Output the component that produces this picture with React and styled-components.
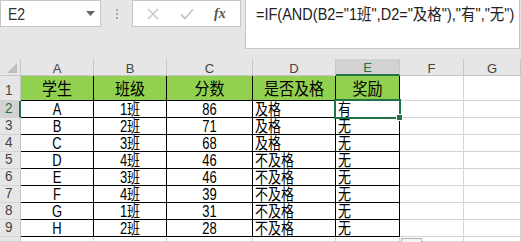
import React from 'react'
import styled, { createGlobalStyle } from 'styled-components'

const GlobalStyle = createGlobalStyle`
    body {
        margin: 0;
        font-family: "Liberation Sans", "Noto Sans CJK SC", sans-serif;
    }
`;

const Sheet = styled.div`
    width: 521px;
    height: 242px;
    overflow: hidden;
    background: #e6e6e6;
    display: flex;
    flex-direction: column;
`;

const FormulaBar = styled.div`
    height: 59px;
    flex: none;
    display: flex;
    align-items: flex-start;
`;

const NameBox = styled.div`
    box-sizing: border-box;
    width: 101px;
    height: 27px;
    background: #fff;
    border: 1px solid #c6c6c6;
    display: flex;
    align-items: center;
    justify-content: space-between;
    padding: 0 5px 0 7px;
    font-size: 14px;
    color: #333;
`;

const Grip = styled.div`
    width: 31px;
    height: 27px;
    display: flex;
    flex-direction: column;
    align-items: center;
    justify-content: center;
    gap: 2px;
    span {
        width: 2px;
        height: 2px;
        background: #a8a8a8;
    }
`;

const ButtonBox = styled.div`
    box-sizing: border-box;
    width: 109px;
    height: 27px;
    background: #fff;
    border: 1px solid #c6c6c6;
    display: flex;
    align-items: center;
    justify-content: space-around;
    padding: 0 4px;
`;

const Fx = styled.span`
    font-family: "Liberation Serif", serif;
    font-style: italic;
    font-weight: bold;
    font-size: 14px;
    color: #555;
`;

const FormulaBox = styled.div`
    box-sizing: border-box;
    margin-left: 4px;
    margin-right: 1px;
    flex: 1;
    height: 49px;
    background: #fff;
    border: 1px solid #c6c6c6;
    border-top: none;
    padding: 7px 0 0 10px;
    font-size: 14.5px;
    color: #222;
    white-space: nowrap;
`;

// the shot is a little stretched in height, so text gets a small vertical scale
const Text = styled.span`
    display: inline-block;
    line-height: 1;
    transform: scaleY(${p => p.$sy || 1.2});
`;

const Grid = styled.div`
    flex: 1;
    display: flex;
    flex-direction: column;
    background: #fff;
`;

const Row = styled.div`
    display: flex;
    height: ${p => p.$h}px;
    flex: ${p => p.$grow ? 1 : 'none'};
`;

const ColHeader = styled.div`
    box-sizing: border-box;
    width: ${p => p.$w ? p.$w + 'px' : 'auto'};
    flex: ${p => p.$w ? 'none' : 1};
    background: ${p => p.$active ? '#d2d2d2' : '#e6e6e6'};
    color: ${p => p.$active ? '#217346' : '#444'};
    border-right: 1px solid #c6c6c6;
    border-bottom: ${p => p.$active ? '2px solid #217346' : '1px solid #c6c6c6'};
    display: flex;
    align-items: center;
    justify-content: center;
    padding-top: 2px;
    font-size: 13px;
    position: relative;
`;

const Corner = styled(ColHeader)`
    justify-content: flex-end;
    align-items: flex-end;
    padding: 0 3px 2px 0;
`;

const RowHeader = styled.div`
    box-sizing: border-box;
    width: 21px;
    flex: none;
    background: ${p => p.$active ? '#d2d2d2' : '#e6e6e6'};
    color: ${p => p.$active ? '#217346' : '#444'};
    border-right: ${p => p.$active ? '2px solid #217346' : '1px solid #c6c6c6'};
    border-bottom: 1px solid #d4d4d4;
    display: flex;
    align-items: ${p => p.$bottom ? 'flex-end' : 'center'};
    padding: 0 0 ${p => p.$bottom ? 3 : 0}px 5px;
    font-size: 13.5px;
`;

const Cell = styled.div`
    box-sizing: border-box;
    width: ${p => p.$w ? p.$w + 'px' : 'auto'};
    flex: ${p => p.$w ? 'none' : 1};
    background: ${p => p.$fill || '#fff'};
    border-right: 1px solid ${p => p.$table ? '#000' : '#d4d4d4'};
    border-bottom: 1px solid ${p => p.$table ? '#000' : '#d4d4d4'};
    display: flex;
    align-items: center;
    justify-content: ${p => p.$align === 'left' ? 'flex-start' : 'center'};
    padding: 0 2px;
    font-size: ${p => p.$big ? 15 : 13}px;
    color: #000;
    white-space: nowrap;
    position: relative;
`;

const Selection = styled.div`
    position: absolute;
    inset: -2px;
    border: 2px solid #217346;
    z-index: 2;
    pointer-events: none;
    &::after {
        content: '';
        position: absolute;
        right: -4px;
        bottom: -4px;
        width: 5px;
        height: 5px;
        background: #217346;
        border: 1px solid #fff;
    }
`;

const QuickButton = styled.div`
    position: absolute;
    left: 1px;
    top: 1px;
    width: 19px;
    height: 10px;
    border: 1px solid #b4b4b4;
    background: #f3f3f3;
`;

const widths = [73, 73, 86, 83, 64, 64, 0];
const letters = ['A', 'B', 'C', 'D', 'E', 'F', 'G'];
const heads = ['学生', '班级', '分数', '是否及格', '奖励'];

const rows = [
    ['A', '1班', 86, '及格', '有'],
    ['B', '2班', 71, '及格', '无'],
    ['C', '3班', 68, '及格', '无'],
    ['D', '4班', 46, '不及格', '无'],
    ['E', '3班', 46, '不及格', '无'],
    ['F', '4班', 39, '不及格', '无'],
    ['G', '1班', 31, '不及格', '无'],
    ['H', '2班', 28, '不及格', '无'],
];

function App() {
    return (
        <Sheet>
            <GlobalStyle />
            <FormulaBar>
                <NameBox>
                    <Text $sy={1.15}>E2</Text>
                    <svg width="9" height="5" viewBox="0 0 9 5">
                        <path d="M0 0 H9 L4.5 5 Z" fill="#666" />
                    </svg>
                </NameBox>
                <Grip><span /><span /><span /></Grip>
                <ButtonBox>
                    <svg width="12" height="12" viewBox="0 0 12 12">
                        <path d="M1 1 L11 11 M11 1 L1 11" stroke="#c4c4c4" strokeWidth="1.4" />
                    </svg>
                    <svg width="14" height="12" viewBox="0 0 14 12">
                        <path d="M1 6.5 L5 10.5 L13 1.5" stroke="#c4c4c4" strokeWidth="1.8" fill="none" />
                    </svg>
                    <Fx>fx</Fx>
                </ButtonBox>
                <FormulaBox>
                    <Text $sy={1.1}>=IF(AND(B2="1班",D2="及格"),"有","无")</Text>
                </FormulaBox>
            </FormulaBar>
            <Grid>
                <Row $h={17}>
                    <Corner $w={21}>
                        <svg width="10" height="10" viewBox="0 0 10 10">
                            <path d="M10 0 V10 H0 Z" fill="#bfbfbf" />
                        </svg>
                    </Corner>
                    {letters.map((l, i) => (
                        <ColHeader key={l} $w={widths[i]} $active={l === 'E'}>{l}</ColHeader>
                    ))}
                </Row>
                <Row $h={25}>
                    <RowHeader $bottom><Text $sy={1.1}>1</Text></RowHeader>
                    {widths.map((w, i) => (
                        <Cell key={i} $w={w} $table={i < 5} $fill={i < 5 ? '#92d050' : null} $big>
                            {heads[i] && <Text $sy={1.1}>{heads[i]}</Text>}
                        </Cell>
                    ))}
                </Row>
                {rows.map((r, ri) => (
                    <Row key={ri} $h={17}>
                        <RowHeader $active={ri === 0}><Text $sy={1.1}>{ri + 2}</Text></RowHeader>
                        {widths.map((w, i) => (
                            <Cell key={i} $w={w} $table={i < 5} $align={i >= 3 ? 'left' : 'center'}>
                                {r[i] !== undefined && <Text>{r[i]}</Text>}
                                {ri === 0 && i === 4 && <Selection />}
                            </Cell>
                        ))}
                    </Row>
                ))}
                <Row $grow>
                    <RowHeader />
                    {widths.map((w, i) => (
                        <Cell key={i} $w={w}>
                            {i === 5 && <QuickButton />}
                        </Cell>
                    ))}
                </Row>
            </Grid>
        </Sheet>
    )
}

export default App
